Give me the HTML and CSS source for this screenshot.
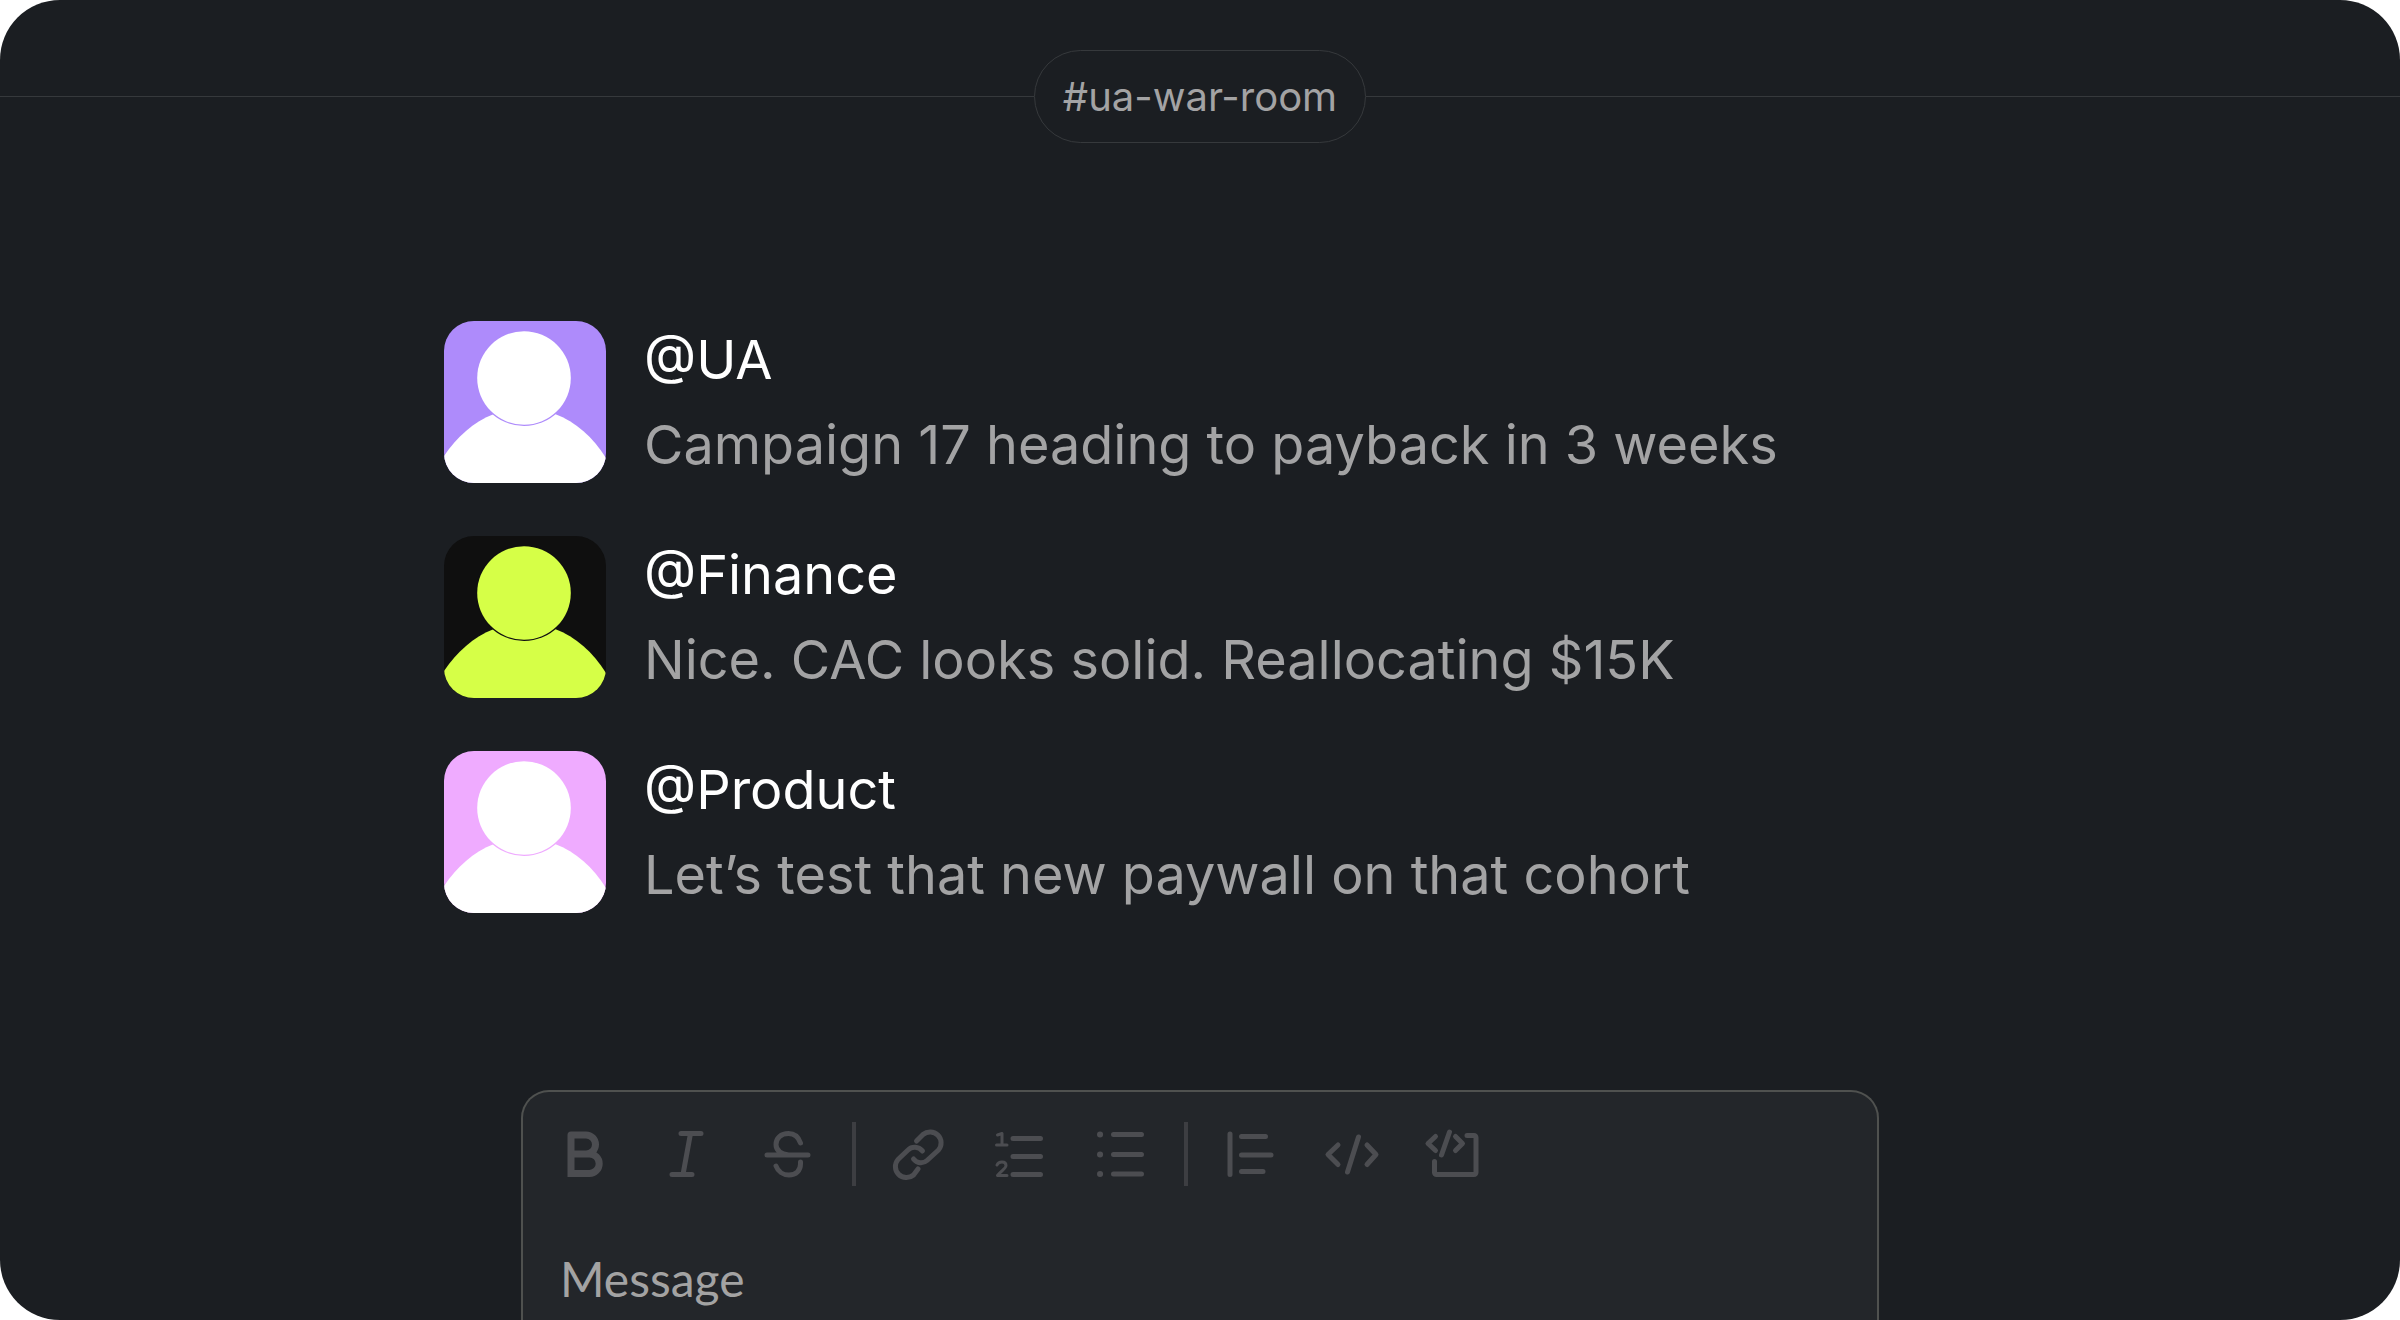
FILE: index.html
```html
<!DOCTYPE html>
<html lang="en">
<head>
<meta charset="UTF-8" />
<meta name="viewport" content="width=device-width, initial-scale=1" />
<title>#ua-war-room</title>
<link rel="stylesheet" href="styles.css">
</head>
<body>

  <main class="panel">

    <!-- Channel name -->
    <header class="channel">
      <h1 class="channel-name">#ua-war-room</h1>
    </header>

    <!-- Messages -->
    <section class="messages">
      <article class="message">
        <svg class="avatar avatar-ua" viewBox="0 0 162 162" aria-hidden="true">
          <path class="person" d="M0 135C13 116 29 101 50 93H111C132 101 149 116 162 137V162H0Z" />
          <circle class="ring" cx="80" cy="57" r="48" />
          <circle class="person" cx="80" cy="57" r="46.8" />
        </svg>
        <div class="message-body">
          <h2 class="author">@UA</h2>
          <p class="text">Campaign 17 heading to payback in 3 weeks</p>
        </div>
      </article>

      <article class="message">
        <svg class="avatar avatar-finance" viewBox="0 0 162 162" aria-hidden="true">
          <path class="person" d="M0 135C13 116 29 101 50 93H111C132 101 149 116 162 137V162H0Z" />
          <circle class="ring" cx="80" cy="57" r="48" />
          <circle class="person" cx="80" cy="57" r="46.8" />
        </svg>
        <div class="message-body">
          <h2 class="author">@Finance</h2>
          <p class="text">Nice. CAC looks solid. Reallocating $15K</p>
        </div>
      </article>

      <article class="message">
        <svg class="avatar avatar-product" viewBox="0 0 162 162" aria-hidden="true">
          <path class="person" d="M0 135C13 116 29 101 50 93H111C132 101 149 116 162 137V162H0Z" />
          <circle class="ring" cx="80" cy="57" r="48" />
          <circle class="person" cx="80" cy="57" r="46.8" />
        </svg>
        <div class="message-body">
          <h2 class="author">@Product</h2>
          <p class="text">Let’s test that new paywall on that cohort</p>
        </div>
      </article>
    </section>

    <!-- Composer -->
    <form class="composer">
      <div class="toolbar">
        <button type="button" class="tool" aria-label="Bold">
          <svg viewBox="0 0 76 76"><path class="heavy" d="M22 19H37a9.500 9.500 0 0 1 0 19H22M22 38H40.500a9.700 9.700 0 0 1 0 19.400H22V19" /></svg>
        </button>
        <button type="button" class="tool" aria-label="Italic">
          <svg viewBox="0 0 76 76"><path d="M31 17.5H51M22 58.5H42M40.500 17.500L33 58.500" /></svg>
        </button>
        <button type="button" class="tool" aria-label="Strikethrough">
          <svg viewBox="0 0 76 76"><path d="M16 39H57M49.500 27C47.500 21 43 17.500 37.500 17.500C30 17.500 25 22 25 28.500C25 34 28.500 37.500 37.500 39M25 50C27 55.500 32 59 38 59C45 59 49.500 54.500 49.500 48V46" /></svg>
        </button>
        <span class="divider"></span>
        <button type="button" class="tool" aria-label="Link">
          <svg viewBox="0 0 76 76"><path d="M35.500 25L42 18.500A11 11 0 0 1 57.500 34L46 44.500C42 48 36 47.500 32.500 43M41.500 35C37.500 30.500 31 30 27 34L17 43.500A11 11 0 0 0 32.500 59L37 53" /></svg>
        </button>
        <button type="button" class="tool" aria-label="Ordered list">
          <svg viewBox="0 0 76 76"><path d="M31 22.500H58.500M31 40.500H58.500M31 58.500H58.500" /><path class="thin" d="M15.500 19L20 17.500V29M14.500 29H25M15 49C16 46.500 18 46 20 46C22.500 46 24 47.500 24 49.500C24 52.500 19 55 15.500 59.500H25" /></svg>
        </button>
        <button type="button" class="tool" aria-label="Bulleted list">
          <svg viewBox="0 0 76 76"><path d="M30.500 18.500H58.500M30.500 38.500H58.500M30.500 58H58.500" /><path class="dots" d="M17 18.500H17.100M17 38.500H17.100M17 58H17.100" /></svg>
        </button>
        <span class="divider"></span>
        <button type="button" class="tool" aria-label="Quote">
          <svg viewBox="0 0 76 76"><path d="M17 18V58.500M28.500 20.500H52.500M28.500 39H58M28.500 55.500H50" /></svg>
        </button>
        <button type="button" class="tool" aria-label="Code">
          <svg viewBox="0 0 76 76"><path d="M24 29L14 38.500L24 48.500M44.500 21L33.500 56M53 29L62 38.500L53 48.500" /></svg>
        </button>
        <button type="button" class="tool" aria-label="Code block">
          <svg viewBox="0 0 76 76"><path d="M20.500 20.500L13 27.500L20.500 34.500M34.500 16L26.500 39M40.500 20.500L47.500 27.500L40.500 34.500M52 19.500H59A2 2 0 0 1 61 21.500V56.500A2 2 0 0 1 59 58.500H21.500A2 2 0 0 1 19.500 56.500V45.500" /></svg>
        </button>
      </div>
      <input class="field" type="text" placeholder="Message" aria-label="Message" />
    </form>

  </main>

</body>
</html>
```
FILE: styles.css
```css
* {
  box-sizing: border-box;
}

body {
  margin: 0;
  background: #fff;
  font-family: Inter, "Liberation Sans", sans-serif;
}

.panel {
  min-height: 100vh;
  display: flex;
  flex-direction: column;
  padding-top: 50px;
  background: #1b1e22;
  border-radius: 60px;
  overflow: hidden;
}

h1, h2, p {
  margin: 0;
  font-weight: 400;
}

/* Channel name, with a line on both sides */
.channel {
  display: flex;
  align-items: center;
}

.channel::before,
.channel::after {
  content: "";
  flex: 1;
  height: 1px;
  background: #36393c;
}

.channel-name {
  padding: 20px 28px;
  border: 1px solid #36393c;
  border-radius: 48px;
  color: #a3a3a4;
  font-size: 40px;
  line-height: 51px;
}

/* Messages */
.messages {
  width: 100%;
  max-width: 1512px;
  margin: 174px auto 173px;
  display: flex;
  flex-direction: column;
  gap: 45px;
}

.message {
  display: flex;
  align-items: center;
  gap: 38px;
}

.avatar {
  flex: none;
  width: 162px;
  height: 162px;
  border-radius: 30px;
}

.avatar-ua {
  background: #ae8bfb;
  color: #ae8bfb;
  fill: #fff;
}

.avatar-finance {
  background: #0f0f0f;
  color: #0f0f0f;
  fill: #d6ff47;
}

.avatar-product {
  background: #efabff;
  color: #efabff;
  fill: #fff;
}

.ring {
  fill: currentColor;
}

.author,
.text {
  font-size: 54px;
  line-height: 85px;
}

.author {
  color: #fff;
}

.text {
  color: #a3a3a4;
}

/* Composer */
.composer {
  flex: 1;
  width: 100%;
  max-width: 1358px;
  margin: 0 auto;
  padding: 24px 26px 0;
  background: #23262a;
  border: 2px solid #4f514f;
  border-bottom: 0;
  border-radius: 28px 28px 0 0;
}

.toolbar {
  display: flex;
  align-items: center;
  gap: 25px;
}

.tool {
  width: 76px;
  height: 76px;
  padding: 0;
  border: 0;
  background: none;
  color: #4c4d51;
  cursor: pointer;
}

.tool svg {
  display: block;
  fill: none;
  stroke: currentColor;
  stroke-width: 5;
  stroke-linecap: round;
  stroke-linejoin: round;
}

.tool .heavy {
  stroke-width: 7;
  stroke-linejoin: miter;
}

.tool .thin {
  stroke-width: 3;
}

.tool .dots {
  stroke-width: 6;
}

.divider {
  width: 4px;
  height: 64px;
  background: #3d3e42;
}

.field {
  display: block;
  width: 100%;
  margin-top: 59px;
  padding: 0 11px;
  border: 0;
  outline: 0;
  background: none;
  color: #a3a3a4;
  font-family: Lato, sans-serif;
  font-size: 48px;
  line-height: 56px;
}

.field::placeholder {
  color: #a3a3a3;
  opacity: 1;
}
```
